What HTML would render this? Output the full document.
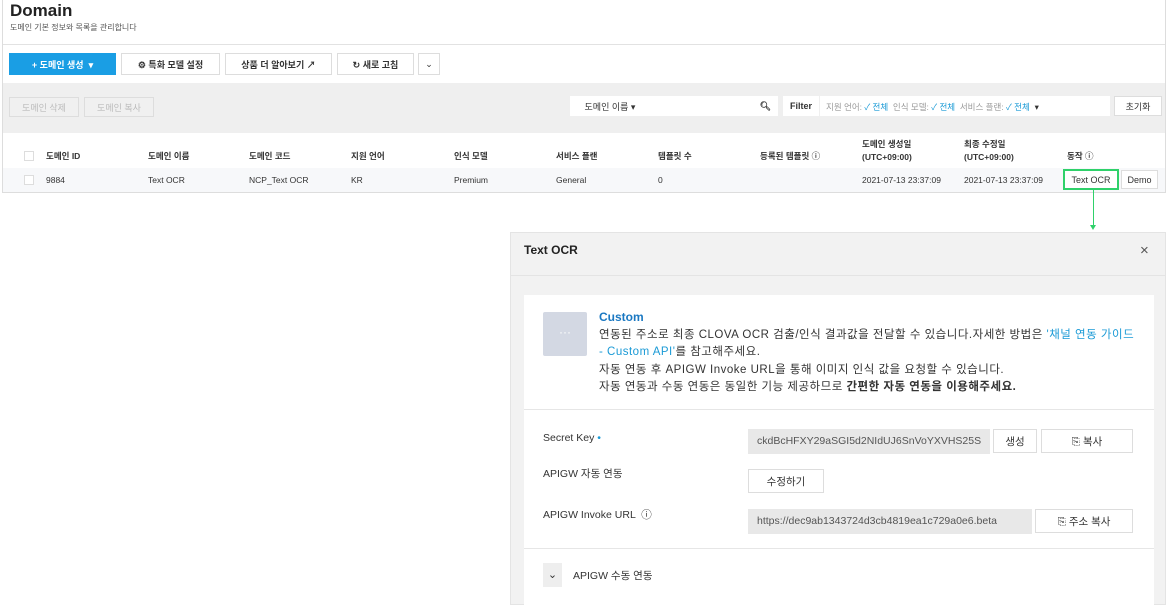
<!DOCTYPE html>
<html><head><meta charset="utf-8"><style>
*{box-sizing:border-box;margin:0;padding:0}
body{width:1168px;height:605px;background:#fff;font-family:"Liberation Sans","Noto Sans CJK KR",sans-serif;color:#333;position:relative;overflow:hidden;font-size:9px}
.a{position:absolute}
.btn{position:absolute;border:1px solid #ddd;background:#fff;display:flex;align-items:center;justify-content:center;font-size:9px;color:#333;font-weight:bold}
.th{position:absolute;top:150px;font-size:8.5px;font-weight:bold;color:#333}
.td{position:absolute;top:175px;font-size:8.5px;color:#333}
.bl{color:#1a9ad6}
</style></head><body>
<div class="a" style="left:2px;top:0;width:1164px;height:193px;border:1px solid #ddd;border-top:none"></div>
<div class="a" style="left:10px;top:1px;font-size:17px;font-weight:bold;color:#222">Domain</div>
<div class="a" style="left:10px;top:22px;font-size:8px;color:#555">도메인 기본 정보와 목록을 관리합니다</div>
<div class="a" style="left:3px;top:44px;width:1162px;height:1px;background:#e2e2e2"></div>
<div class="btn" style="left:9px;top:53px;width:107px;height:22px;background:#1a9ee4;border-color:#1a9ee4;color:#fff">+ 도메인 생성 &nbsp;▾</div>
<div class="btn" style="left:121px;top:53px;width:99px;height:22px">⚙ 특화 모델 설정</div>
<div class="btn" style="left:225px;top:53px;width:107px;height:22px">상품 더 알아보기 ↗</div>
<div class="btn" style="left:337px;top:53px;width:77px;height:22px">↻ 새로 고침</div>
<div class="btn" style="left:418px;top:53px;width:22px;height:22px;font-weight:normal">⌄</div>
<div class="a" style="left:3px;top:83px;width:1162px;height:50px;background:#efefef"></div>
<div class="btn" style="left:9px;top:97px;width:70px;height:20px;color:#bbb;font-weight:normal;background:#f0f0f0">도메인 삭제</div>
<div class="btn" style="left:84px;top:97px;width:70px;height:20px;color:#bbb;font-weight:normal;background:#f0f0f0">도메인 복사</div>
<div class="btn" style="left:570px;top:96px;width:80px;height:20px;font-weight:normal;border-color:#fff">도메인 이름 ▾</div>
<div class="btn" style="left:650px;top:96px;width:128px;height:20px;justify-content:flex-end;padding-right:6px;border-color:#fff">🔍︎</div>
<div class="btn" style="left:783px;top:96px;width:36px;height:20px;border-color:#fff">Filter</div>
<div class="a" style="left:820px;top:96px;width:290px;height:20px;background:#fff;font-size:8.5px;color:#999;padding:5px 6px">지원 언어: <span class="bl">✓ 전체</span>&nbsp; 인식 모델: <span class="bl">✓ 전체</span>&nbsp; 서비스 플랜: <span class="bl">✓ 전체</span> &nbsp;<span style="color:#333">▾</span></div>
<div class="btn" style="left:1114px;top:96px;width:48px;height:20px;font-weight:normal">초기화</div>
<div class="a" style="left:24px;top:151px;width:10px;height:10px;border:1px solid #ddd"></div>
<div class="th" style="left:46px">도메인 ID</div>
<div class="th" style="left:148px">도메인 이름</div>
<div class="th" style="left:249px">도메인 코드</div>
<div class="th" style="left:351px">지원 언어</div>
<div class="th" style="left:454px">인식 모델</div>
<div class="th" style="left:556px">서비스 플랜</div>
<div class="th" style="left:658px">템플릿 수</div>
<div class="th" style="left:760px">등록된 템플릿 ⓘ</div>
<div class="th" style="left:862px;top:138px;line-height:13px">도메인 생성일<br>(UTC+09:00)</div>
<div class="th" style="left:964px;top:138px;line-height:13px">최종 수정일<br>(UTC+09:00)</div>
<div class="th" style="left:1067px">동작 ⓘ</div>
<div class="a" style="left:3px;top:168px;width:1162px;height:24px;background:#f7f8fa"></div>
<div class="a" style="left:24px;top:175px;width:10px;height:10px;border:1px solid #ddd;background:#fff"></div>
<div class="td" style="left:46px">9884</div>
<div class="td" style="left:148px">Text OCR</div>
<div class="td" style="left:249px">NCP_Text OCR</div>
<div class="td" style="left:351px">KR</div>
<div class="td" style="left:454px">Premium</div>
<div class="td" style="left:556px">General</div>
<div class="td" style="left:658px">0</div>
<div class="td" style="left:862px">2021-07-13 23:37:09</div>
<div class="td" style="left:964px">2021-07-13 23:37:09</div>
<div class="btn" style="left:1063px;top:169px;width:56px;height:21px;border:2px solid #2fd16a;font-weight:normal">Text OCR</div>
<div class="btn" style="left:1121px;top:170px;width:37px;height:19px;font-weight:normal">Demo</div>
<div class="a" style="left:1093px;top:190px;width:1px;height:36px;background:#2fd16a"></div>
<div class="a" style="left:1090px;top:225px;width:0;height:0;border-left:3px solid transparent;border-right:3px solid transparent;border-top:5px solid #2fd16a"></div>
<div class="a" style="left:510px;top:232px;width:656px;height:373px;background:#f2f2f2;border:1px solid #e4e4e4"></div>
<div class="a" style="left:511px;top:275px;width:654px;height:1px;background:#e4e4e4"></div>
<div class="a" style="left:524px;top:243px;font-size:12px;font-weight:bold;color:#222">Text OCR</div>
<div class="a" style="left:1140px;top:242px;font-size:15px;color:#555">×</div>
<div class="a" style="left:524px;top:295px;width:630px;height:310px;background:#fff"></div>
<div class="a" style="left:524px;top:409px;width:630px;height:1px;background:#e6e6e6"></div>
<div class="a" style="left:524px;top:548px;width:630px;height:1px;background:#e6e6e6"></div>
<div class="a" style="left:543px;top:312px;width:44px;height:44px;background:#d3d8e3;border-radius:2px;color:#fff;text-align:center;font-size:12px;line-height:40px">···</div>
<div class="a" style="left:599px;top:310px;font-size:12px;font-weight:bold;color:#1a78c2">Custom</div>
<div class="a" style="left:599px;top:327px;width:560px;font-size:11.5px;letter-spacing:0.5px;line-height:17.3px;color:#333;white-space:nowrap">연동된 주소로 최종 CLOVA OCR 검출/인식 결과값을 전달할 수 있습니다.자세한 방법은 <span class="bl">'채널 연동 가이드</span><br><span class="bl">- Custom API'</span>를 참고해주세요.<br>자동 연동 후 APIGW Invoke URL을 통해 이미지 인식 값을 요청할 수 있습니다.<br>자동 연동과 수동 연동은 동일한 기능 제공하므로 <b>간편한 자동 연동을 이용해주세요.</b></div>
<div class="a" style="left:543px;top:432px;font-size:10.5px">Secret Key <span class="bl">•</span></div>
<div class="a" style="left:543px;top:466px;font-size:10.5px">APIGW 자동 연동</div>
<div class="a" style="left:543px;top:507px;font-size:10.5px">APIGW Invoke URL &nbsp;ⓘ</div>
<div class="a" style="left:748px;top:429px;width:242px;height:25px;background:#e8e8e8;font-size:10.5px;color:#555;padding:6px 9px;overflow:hidden;white-space:nowrap">ckdBcHFXY29aSGI5d2NIdUJ6SnVoYXVHS25S</div>
<div class="btn" style="left:993px;top:429px;width:44px;height:24px;font-weight:normal;font-size:10.5px">생성</div>
<div class="btn" style="left:1041px;top:429px;width:92px;height:24px;font-weight:normal;font-size:10.5px">⎘ 복사</div>
<div class="btn" style="left:748px;top:469px;width:76px;height:24px;font-weight:normal;font-size:10.5px">수정하기</div>
<div class="a" style="left:748px;top:509px;width:284px;height:25px;background:#e8e8e8;font-size:10.5px;color:#555;padding:6px 9px;overflow:hidden;white-space:nowrap">https://dec9ab1343724d3cb4819ea1c729a0e6.beta</div>
<div class="btn" style="left:1035px;top:509px;width:98px;height:24px;font-weight:normal;font-size:10.5px">⎘ 주소 복사</div>
<div class="a" style="left:543px;top:563px;width:19px;height:24px;background:#eee;text-align:center;font-size:11px;line-height:24px">⌄</div>
<div class="a" style="left:573px;top:568px;font-size:10.5px">APIGW 수동 연동</div>
</body></html>
